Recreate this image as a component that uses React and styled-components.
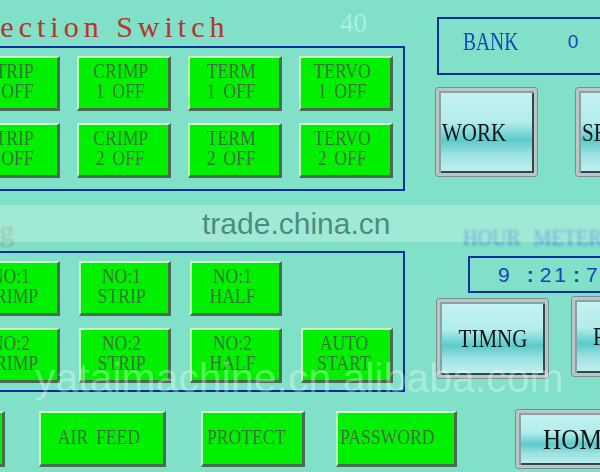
import React from 'react';
import styled, { createGlobalStyle } from 'styled-components';

const SERIF = '"Liberation Serif", "Times New Roman", serif';
const SANS = '"Liberation Sans", Arial, sans-serif';
const FRAME_BLUE = '#0c2e9c';
const TEXT_BLUE = '#1a44b8';

const Global = createGlobalStyle`
  html, body { margin: 0; padding: 0; background: #80e0c8; }
  #root { width: 600px; height: 472px; }
`;

const Screen = styled.div`
  position: relative;
  width: 600px;
  height: 472px;
  overflow: hidden;
  background: #80e0c8;
  display: flex;
  flex-direction: column;
  font-family: ${SERIF};
`;

const Upper = styled.div`
  flex: none;
  display: flex;
  height: 392px;
`;

const LeftCol = styled.div`
  flex: none;
  width: 405px;
  display: flex;
  flex-direction: column;
`;

const TitleRow = styled.div`
  flex: none;
  height: 46px;
  display: flex;
  align-items: flex-start;
`;

const Title = styled.div`
  margin: 12px 0 0 -53px;
  font: 30px/30px ${SERIF};
  letter-spacing: 5px;
  color: #b8342c;
  white-space: nowrap;
`;

const FaintTitle = styled.div`
  margin: 25px 0 0 -98px;
  font: 30px/30px ${SERIF};
  letter-spacing: 5px;
  color: #8a7a66;
  white-space: nowrap;
  filter: blur(1.2px);
  opacity: 0.55;
`;

const Counter = styled.div`
  margin: 10px 38px 0 auto;
  font: 27px/27px ${SERIF};
  color: #a6f2e4;
`;

const Group = styled.div`
  flex: none;
  box-sizing: border-box;
  height: ${p => p.$h}px;
  margin-left: -60px;
  border: 2px solid ${FRAME_BLUE};
  padding: 8px 10px 0 0;
  display: grid;
  grid-template-columns: repeat(4, ${p => p.$w}px);
  grid-auto-rows: 55px;
  column-gap: ${p => p.$gap}px;
  row-gap: 12px;
  justify-content: end;
  align-content: start;
`;

const GroupGap = styled.div`
  flex: none;
  height: 60px;
  display: flex;
  align-items: flex-start;
`;

/* bevelled green push key */
const Key = styled.div`
  box-sizing: border-box;
  flex: none;
  ${p => p.$w && `width: ${p.$w}px;`}
  height: ${p => p.$h || 55}px;
  margin-left: ${p => p.$ml || 0}px;
  background: #00f000;
  border-style: solid;
  border-width: 2px 3px 3px 2px;
  border-color: #d2ffd2 #4a6a52 #4a6a52 #c0f4c0;
  display: flex;
  flex-direction: column;
  justify-content: center;
  align-items: ${p => (p.$left ? 'flex-start' : 'center')};
  padding: 0 ${p => (p.$left ? 0 : 6)}px 4px ${p => p.$pl || 0}px;
  font: 21px/20px ${SERIF};
  color: #3a703a;
  white-space: pre;
  word-spacing: 4px;
`;

const Narrow = styled.span`
  display: inline-block;
  transform: scaleX(${p => p.$sx || 0.84});
  transform-origin: ${p => (p.$left ? 'left' : 'center')} center;
  white-space: pre;
`;

const Blank = styled.div``;

const RightCol = styled.div`
  flex: none;
  width: 320px;
  margin-left: 31px;
  display: flex;
  flex-direction: column;
`;

const BankBox = styled.div`
  flex: none;
  box-sizing: border-box;
  height: 58px;
  margin: 17px 0 0 1px;
  border: 2px solid ${FRAME_BLUE};
  display: flex;
  align-items: center;
  padding: 0 0 9px 24px;
  color: ${TEXT_BLUE};
`;

const BankLabel = styled.span`
  font: 25px/25px ${SERIF};
`;

const BankValue = styled.span`
  margin-left: 34px;
  font: 19px/19px ${SANS};
`;

const PadRow = styled.div`
  flex: none;
  display: flex;
  gap: ${p => p.$gap}px;
  margin-top: ${p => p.$mt}px;
`;

/* framed cyan screen-change button */
const Pad = styled.div`
  box-sizing: border-box;
  flex: none;
  width: ${p => p.$w}px;
  height: ${p => p.$h}px;
  margin-left: ${p => p.$ml || 0}px;
  margin-top: ${p => p.$mt || 0}px;
  border: 3px solid #bcc6c6;
  border-radius: 3px;
  box-shadow:
    0 0 0 1px #7e8c8c,
    inset 2px 2px 0 #86a2a2,
    inset -2px -2px 0 #2f4a4a;
  background: linear-gradient(
    180deg,
    #c6f2f2 0%,
    #b2ecec 38%,
    #5ccaca 60%,
    #9ee2e2 78%,
    #c2f0f0 100%
  );
  display: flex;
  align-items: center;
  justify-content: ${p => (p.$left ? 'flex-start' : 'center')};
  padding-left: ${p => (p.$left ? p.$pl || 3 : 0)}px;
  font: ${p => p.$fs || 25}px/1 ${SERIF};
  color: #101414;
  white-space: nowrap;
`;

const HourLabel = styled.div`
  flex: none;
  height: 22px;
  margin-top: 50px;
  padding-left: 27px;
  font: 24px/22px ${SERIF};
  word-spacing: 10px;
  color: #3858d8;
  white-space: nowrap;
  filter: blur(1.4px);
  opacity: 0.7;
`;

const TimeBox = styled.div`
  flex: none;
  box-sizing: border-box;
  height: 37px;
  margin: 8px 0 0 32px;
  border: 2px solid ${FRAME_BLUE};
  padding: 6px 0 0 28px;
  font: 21px/21px ${SANS};
  color: ${TEXT_BLUE};
  white-space: pre;
  display: flex;
  align-items: baseline;
`;

const Digits = styled.span`
  letter-spacing: 3px;
`;

const Sep = styled.span`
  font-weight: bold;
  margin: 0 ${p => p.$r || 4}px 0 ${p => p.$l || 4}px;
`;

const BottomRow = styled.div`
  flex: none;
  display: flex;
  align-items: flex-start;
  margin-top: 19px;
`;

/* translucent stamps laid over the screen */
const Band = styled.div`
  position: absolute;
  left: 0;
  right: 0;
  top: 205px;
  height: 37px;
  background: rgba(226, 255, 244, 0.32);
  pointer-events: none;
`;

const BandText = styled.div`
  position: absolute;
  left: 202px;
  top: 0;
  font: 30px/37px ${SANS};
  color: rgba(62, 122, 108, 0.85);
  white-space: nowrap;
`;

const Stamp = styled.div`
  position: absolute;
  left: 35px;
  top: 358px;
  font: 41px/41px ${SANS};
  color: rgba(255, 255, 255, 0.32);
  white-space: nowrap;
  filter: blur(0.6px);
  pointer-events: none;
`;

const selection = [
  ['STRIP', '1 OFF'], ['CRIMP', '1 OFF'], ['TERM', '1 OFF'], ['TERVO', '1 OFF'],
  ['STRIP', '2 OFF'], ['CRIMP', '2 OFF'], ['TERM', '2 OFF'], ['TERVO', '2 OFF'],
];

const manual = [
  ['NO:1', 'CRIMP'], ['NO:1', 'STRIP'], ['NO:1', 'HALF'], null,
  ['NO:2', 'CRIMP'], ['NO:2', 'STRIP'], ['NO:2', 'HALF'], ['AUTO', 'START'],
];

function KeyLabel({ lines, left }) {
  return lines.map(line => (
    <Narrow key={line} $left={left}>{line}</Narrow>
  ));
}

export default function App() {
  return (
    <>
      <Global />
      <Screen>
        <Upper>
          <LeftCol>
            <TitleRow>
              <Title>Selection Switch</Title>
              <Counter>40</Counter>
            </TitleRow>
            <Group $h={145} $w={94} $gap={17}>
              {selection.map((k, i) => (
                <Key key={i}><KeyLabel lines={k} /></Key>
              ))}
            </Group>
            <GroupGap>
              <FaintTitle>Timing</FaintTitle>
            </GroupGap>
            <Group $h={141} $w={92} $gap={19}>
              {manual.map((k, i) =>
                k ? <Key key={i}><KeyLabel lines={k} /></Key> : <Blank key={i} />
              )}
            </Group>
          </LeftCol>

          <RightCol>
            <BankBox>
              <BankLabel><Narrow $left $sx={0.78}>BANK</Narrow></BankLabel>
              <BankValue>0</BankValue>
            </BankBox>
            <PadRow $gap={39} $mt={13}>
              <Pad $w={101} $h={88} $left><Narrow $left>WORK</Narrow></Pad>
              <Pad $w={101} $h={88} $left><Narrow $left>SET</Narrow></Pad>
            </PadRow>
            <HourLabel><Narrow $left>HOUR METER</Narrow></HourLabel>
            <TimeBox>
              <Digits>9</Digits>
              <Sep $l={14} $r={6}>:</Sep>
              <Digits>21</Digits>
              <Sep $l={0} $r={6}>:</Sep>
              <Digits>7</Digits>
            </TimeBox>
            <PadRow $gap={24} $mt={6}>
              <Pad $w={111} $h={79} $ml={1}><Narrow>TIMNG</Narrow></Pad>
              <Pad $w={111} $h={79} $mt={-2} $left $pl={18}><Narrow $left>PARA</Narrow></Pad>
            </PadRow>
          </RightCol>
        </Upper>

        <BottomRow>
          <Key $w={60} $h={56} $ml={-55} />
          <Key $w={127} $h={56} $ml={34}><KeyLabel lines={['AIR FEED']} /></Key>
          <Key $w={104} $h={56} $ml={35} $left $pl={4}><KeyLabel lines={['PROTECT']} left /></Key>
          <Key $w={121} $h={56} $ml={31} $left $pl={2}><KeyLabel lines={['PASSWORD']} left /></Key>
          <Pad $w={129} $h={58} $ml={59} $mt={-1} $fs={30}><Narrow>HOME</Narrow></Pad>
        </BottomRow>

        <Band>
          <BandText>trade.china.cn</BandText>
        </Band>
        <Stamp>yataimachine.cn alibaba.com</Stamp>
      </Screen>
    </>
  );
}
